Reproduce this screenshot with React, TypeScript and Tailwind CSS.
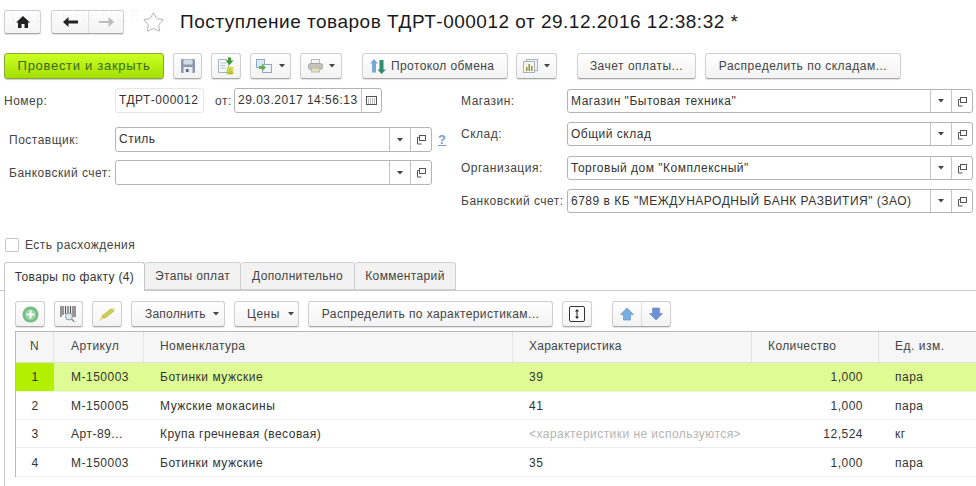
import React from 'react';
import { Star } from 'lucide-react';

const btn =
  'flex items-center justify-center h-full rounded-[3px] border border-[#cfcfcf] border-b-[#aaaaaa] bg-gradient-to-b from-white to-[#f3f3f3] text-[#444] shadow-[0_1px_1px_rgba(0,0,0,0.12)]';

const Caret = () => (
  <svg width="6" height="4" viewBox="0 0 6 4" className="shrink-0">
    <path d="M0 0h6L3 3.5z" fill="#444" />
  </svg>
);

const OpenIcon = () => (
  <svg width="11" height="11" viewBox="0 0 11 11" fill="none" stroke="#555" strokeWidth="1">
    <rect x="3.5" y="1.5" width="6" height="5" fill="#fff" />
    <path d="M1.5 5v5h4M3.5 3.5h-2V5" />
  </svg>
);

const Field = ({ value, className }: { value: string; className: string }) => (
  <div className={`flex h-full items-stretch rounded-[3px] border border-[#b4b4b4] bg-white ${className}`}>
    <div className="flex-1 truncate pl-[3px] leading-[22px] text-[#333]">{value}</div>
    <div className="flex w-[21px] items-center justify-center border-l border-[#c4c4c4]">
      <Caret />
    </div>
    <div className="flex w-[21px] items-center justify-center border-l border-[#c4c4c4]">
      <OpenIcon />
    </div>
  </div>
);

const Save = () => (
  <svg width="16" height="16" viewBox="0 0 16 16">
    <rect x="1" y="1" width="14" height="14" rx="1" fill="#8b98ae" />
    <rect x="3.5" y="1.5" width="9" height="5" fill="#d5dbe6" />
    <rect x="3.5" y="9" width="9" height="6" fill="#e8ebf0" />
    <rect x="6" y="11" width="2.5" height="3" fill="#56617a" />
  </svg>
);

const Posting = () => (
  <svg width="18" height="19" viewBox="0 0 18 19">
    <path d="M1.5 2.5h8l2 2v11h-10z" fill="#f4f6f8" stroke="#a9b3bd" />
    <path d="M3.5 6h6M3.5 8.500h5M3.500 11h5" stroke="#b8c2cc" />
    <path d="M11 0.500h3v3h2.500L12.500 8l-4-4.500H11z" fill="#3c9a34" />
    <ellipse cx="13" cy="11" rx="3.500" ry="1.500" fill="#d8d84a" />
    <ellipse cx="13" cy="13.500" rx="3.500" ry="1.500" fill="#c9cf3c" />
    <ellipse cx="13" cy="16" rx="3.500" ry="1.500" fill="#b9c432" />
  </svg>
);

const Exchange = () => (
  <svg width="17" height="15" viewBox="0 0 17 15">
    <rect x="0.500" y="0.500" width="8" height="8" fill="#dbe7f3" stroke="#8fa9c2" />
    <rect x="6.500" y="5.500" width="9" height="8" fill="#eef3f8" stroke="#8fa9c2" />
    <path d="M3 7h3V5l4 3.500L6 12v-2H3z" fill="#5fb04f" />
  </svg>
);

const Printer = () => (
  <svg width="15" height="14" viewBox="0 0 15 14">
    <rect x="3.500" y="0.500" width="8" height="4" fill="#f5f5f5" stroke="#bbb" />
    <rect x="0.500" y="4.500" width="14" height="6" rx="2" fill="#c4c4ba" stroke="#a5a5a5" />
    <rect x="3.500" y="9" width="8" height="4" fill="#e9dfb8" stroke="#bbb" />
  </svg>
);

const Protocol = () => (
  <svg width="16" height="17" viewBox="0 0 16 17">
    <path d="M4 1L8 5.500H6v9H2v-9H0z" fill="#7ba7d6" />
    <path d="M11.500 16L7.500 11.500H9.500V2h4v9.500H16z" fill="#2f8d6f" />
  </svg>
);

const Report = () => (
  <svg width="15" height="14" viewBox="0 0 15 14">
    <rect x="3.500" y="0.500" width="11" height="11" fill="#eef1f6" stroke="#a8b2c4" />
    <rect x="0.500" y="2.500" width="11" height="11" fill="#f7f5e6" stroke="#a8b2c4" />
    <path d="M3 12V8h1.500v4zM5.500 12V5H7v7zM8 12V7h1.500v5z" fill="#8a9648" />
  </svg>
);

const Plus = () => (
  <svg width="17" height="17" viewBox="0 0 17 17">
    <circle cx="8.500" cy="8.500" r="8" fill="#74bb84" />
    <circle cx="8.500" cy="8.500" r="5.500" fill="#9ad3a4" />
    <path d="M7.500 4.500h2v3h3v2h-3v3h-2v-3h-3v-2h3z" fill="#fff" />
  </svg>
);

const Barcode = () => (
  <svg width="17" height="18" viewBox="0 0 17 18">
    <path d="M1 1v11M3 1v9M5.500 1v8M8 1v7M10.500 1v8M13 1v11M15 1v11" stroke="#555" strokeWidth="1.200" />
    <circle cx="9" cy="11.500" r="3.500" fill="#dfe8ee" stroke="#8a99a5" />
    <path d="M11.500 14l3 3" stroke="#8a99a5" strokeWidth="1.500" />
  </svg>
);

const Brush = () => (
  <svg width="18" height="15" viewBox="0 0 18 15">
    <path d="M1 14l3-5 3 2z" fill="#e2d87a" />
    <path d="M4 9l9-7 3 2-9 7z" fill="#d3d24e" stroke="#a5a530" strokeWidth="0.700" />
    <path d="M13 2l3-1.500 1 1.500-1 2z" fill="#e6df9a" />
  </svg>
);

const FitHeight = () => (
  <svg width="16" height="16" viewBox="0 0 16 16">
    <rect x="0.500" y="0.500" width="15" height="15" rx="1.500" fill="#fff" stroke="#333" />
    <path d="M8 3l2 2.500H6zM8 13l2-2.500H6z" fill="#222" />
    <path d="M8 5v6" stroke="#222" />
  </svg>
);

const ArrowBlock = ({ down }: { down?: boolean }) => (
  <svg width="14" height="14" viewBox="0 0 14 14" className={down ? 'rotate-180' : ''}>
    <path d="M7 1l6.500 6.500H10.500V13h-7V7.500H.500z" fill={down ? '#6f8fd8' : '#79aee2'} stroke="#5a86bf" strokeWidth="0.600" />
  </svg>
);

type Row = { n: string; art: string; name: string; ch: string; qty: string; unit: string };

const rows: Row[] = [
  { n: '1', art: 'М-150003', name: 'Ботинки мужские', ch: '39', qty: '1,000', unit: 'пара' },
  { n: '2', art: 'М-150005', name: 'Мужские мокасины', ch: '41', qty: '1,000', unit: 'пара' },
  { n: '3', art: 'Арт-89...', name: 'Крупа гречневая (весовая)', ch: '<характеристики не используются>', qty: '12,524', unit: 'кг' },
  { n: '4', art: 'М-150003', name: 'Ботинки мужские', ch: '35', qty: '1,000', unit: 'пара' },
];

const rowHeights = ['h-[29px]', 'h-[28px]', 'h-[28px] pt-px', 'h-[29px] pt-px'];

const orgFields = [
  { label: 'Магазин:', value: 'Магазин "Бытовая техника"', gap: 'mb-[9px]' },
  { label: 'Склад:', value: 'Общий склад', gap: 'mb-[10px]' },
  { label: 'Организация:', value: 'Торговый дом "Комплексный"', gap: 'mb-[9px]' },
  { label: 'Банковский счет:', value: '6789 в КБ "МЕЖДУНАРОДНЫЙ БАНК РАЗВИТИЯ" (ЗАО)', gap: '' },
];

export default function App() {
  return (
    <div className="relative h-[486px] w-[976px] overflow-hidden bg-white font-['Liberation_Sans',Arial,sans-serif] text-[12px] tracking-[0.5px] text-[#444]">
      {/* faint watermark over the title bar */}
      <div className="absolute left-[10px] top-[3px] z-10 text-[18px] tracking-[1px] text-black/[0.03]">CLEVERENCE</div>

      {/* Title */}
      <div className="relative mt-[10px] flex h-[24px] items-center pl-[4px]">
        <div className={`${btn} w-[37px]`}>
          <svg width="14" height="12" viewBox="0 0 14 12">
            <path d="M7 0L14 6.500h-2V12H8.500V8h-3v4H2V6.500H0z" fill="#222" />
          </svg>
        </div>
        <div className={`${btn} ml-[10px] w-[73px]`}>
          <div className="flex h-full w-[37px] items-center justify-center border-r border-[#e0e0e0]">
            <svg width="15" height="10" viewBox="0 0 15 10">
              <path d="M5.500 0v3.500H15v3H5.500V10L0 5z" fill="#222" />
            </svg>
          </div>
          <div className="flex h-full flex-1 items-center justify-center">
            <svg width="15" height="10" viewBox="0 0 15 10">
              <path d="M9.500 0v4H0v2h9.500v4L15 5z" fill="#bdbdbd" />
            </svg>
          </div>
        </div>
        <Star className="ml-[18px] h-[23px] w-[23px] text-[#9a9a9a]" strokeWidth={0.8} />
        <div className="ml-[15px] whitespace-nowrap text-[19px] tracking-[0.5px] text-[#1a1a1a]">
          Поступление товаров ТДРТ-000012 от 29.12.2016 12:38:32 *
        </div>
      </div>

      {/* Command bar */}
      <div className="mt-[19px] flex h-[26px] items-stretch pl-[4px]">
        <div className="flex w-[160px] items-center justify-center rounded-[3px] border border-[#86a838] bg-gradient-to-b from-[#ccff22] to-[#a2e000] text-[13px] tracking-[0.7px] text-[#3a6a22] shadow-[0_1px_1px_rgba(0,0,0,0.2)]">
          Провести и закрыть
        </div>
        <div className={`${btn} ml-[9px] w-[29px]`}><Save /></div>
        <div className={`${btn} ml-[9px] w-[30px]`}><Posting /></div>
        <div className={`${btn} ml-[9px] w-[41px] gap-[6px]`}><Exchange /><Caret /></div>
        <div className={`${btn} ml-[9px] w-[42px] gap-[6px]`}><Printer /><Caret /></div>
        <div className={`${btn} ml-[20px] w-[146px] !justify-start gap-[5px] pl-[7px] tracking-[0.4px]`}><Protocol />Протокол обмена</div>
        <div className={`${btn} ml-[8px] w-[41px] gap-[6px]`}><Report /><Caret /></div>
        <div className={`${btn} ml-[20px] w-[119px]`}>Зачет оплаты...</div>
        <div className={`${btn} ml-[9px] w-[196px]`}>Распределить по складам...</div>
      </div>

      {/* Header fields */}
      <div className="mt-[9px] flex h-[125px]">
        <div className="w-[461px] shrink-0">
          <div className="flex h-[25px] items-center pl-[4px]">
            <div className="w-[111px]">Номер:</div>
            <div className="h-full w-[89px] rounded-[3px] border border-[#e6e6e6] pl-[3px] leading-[23px] text-[#333]">ТДРТ-000012</div>
            <div className="ml-[11px] w-[19px]">от:</div>
            <div className="flex h-full w-[148px] rounded-[3px] border border-[#b4b4b4]">
              <div className="flex-1 truncate pl-[3px] leading-[23px] text-[#333]">29.03.2017 14:56:13</div>
              <div className="flex w-[20px] items-center justify-center border-l border-[#c4c4c4]">
                <svg width="11" height="9" viewBox="0 0 11 9">
                  <rect x="0.500" y="0.500" width="10" height="8" fill="none" stroke="#555" />
                  <path d="M2 3h7M2 5h7M2 7h7" stroke="#777" strokeDasharray="1 1" />
                </svg>
              </div>
            </div>
          </div>
          <div className="mt-[14px] flex h-[25px] items-center pl-[9px]">
            <div className="w-[106px]">Поставщик:</div>
            <Field value="Стиль" className="w-[317px]" />
            <div className="ml-[6px] text-[13px] font-bold text-[#7d9cc9] underline">?</div>
          </div>
          <div className="mt-[8px] flex h-[25px] items-center pl-[9px]">
            <div className="w-[106px] whitespace-nowrap">Банковский счет:</div>
            <Field value="" className="w-[317px]" />
          </div>
        </div>
        <div className="flex flex-col pt-[1px]">
          {orgFields.map((f) => (
            <div key={f.label} className={`flex h-[24px] items-center ${f.gap}`}>
              <div className="w-[106px] whitespace-nowrap">{f.label}</div>
              <Field value={f.value} className="w-[406px]" />
            </div>
          ))}
        </div>
      </div>

      {/* Discrepancy flag */}
      <div className="mt-[24px] flex h-[15px] items-center pl-[5px]">
        <div className="h-[14px] w-[14px] rounded-[2px] border border-[#c4c4c4] bg-white" />
        <span className="ml-[6px]">Есть расхождения</span>
      </div>

      {/* Tabs */}
      <div className="mt-[10px] flex h-[29px] items-stretch border-b border-[#c8c8c8] pl-[4px] tracking-[0.35px]">
        <div className="z-10 -mb-px flex w-[141px] items-center justify-center rounded-t-[3px] border border-b-0 border-[#c8c8c8] bg-white text-[#333]">Товары по факту (4)</div>
        <div className="flex w-[96px] items-center justify-center rounded-t-[3px] border border-l-0 border-[#d0d0d0] bg-[#f2f2f2]">Этапы оплат</div>
        <div className="flex w-[114px] items-center justify-center rounded-t-[3px] border border-l-0 border-[#d0d0d0] bg-[#f2f2f2]">Дополнительно</div>
        <div className="flex w-[101px] items-center justify-center rounded-t-[3px] border border-l-0 border-[#d0d0d0] bg-[#f2f2f2]">Комментарий</div>
      </div>

      {/* Tab body */}
      <div className="ml-[4px] h-[196px] border-l border-[#c8c8c8] pl-[10px] pt-[10px]">
        <div className="flex h-[26px] items-stretch">
          <div className={`${btn} w-[30px]`}><Plus /></div>
          <div className={`${btn} ml-[9px] w-[29px]`}><Barcode /></div>
          <div className={`${btn} ml-[9px] w-[30px]`}><Brush /></div>
          <div className={`${btn} ml-[9px] w-[94px] !justify-start gap-[7px] pl-[13px] tracking-[0.2px]`}>Заполнить<Caret /></div>
          <div className={`${btn} ml-[9px] w-[65px] !justify-start gap-[8px] pl-[12px]`}>Цены<Caret /></div>
          <div className={`${btn} ml-[9px] w-[245px] tracking-[0.4px]`}>Распределить по характеристикам...</div>
          <div className={`${btn} ml-[9px] w-[30px]`}><FitHeight /></div>
          <div className={`${btn} ml-[20px] w-[59px]`}>
            <div className="flex h-full w-[29px] items-center justify-center border-r border-[#dddddd]"><ArrowBlock /></div>
            <div className="flex h-full flex-1 items-center justify-center"><ArrowBlock down /></div>
          </div>
        </div>

        {/* Goods table */}
        <div className="mt-[4px] border-l border-t border-[#b8b8b8]">
          <div className="grid h-[31px] grid-cols-[38px_90px_369px_239px_127px_97px] items-center border-b border-[#dedede] bg-[#f6f6f6]">
            <div className="flex h-full items-center justify-center border-r border-[#e6e6e6] pb-[3px]">N</div>
            <div className="flex h-full items-center border-r border-[#e6e6e6] pb-[3px] pl-[17px]">Артикул</div>
            <div className="flex h-full items-center border-r border-[#e6e6e6] pb-[3px] pl-[16px] tracking-[0.4px]">Номенклатура</div>
            <div className="flex h-full items-center border-r border-[#e0e0e0] pb-[3px] pl-[16px] tracking-[0.25px]">Характеристика</div>
            <div className="flex h-full items-center border-r border-[#e0e0e0] pb-[3px] pl-[16px] tracking-[0.4px]">Количество</div>
            <div className="flex h-full items-center pb-[3px] pl-[16px]">Ед. изм.</div>
          </div>
          {rows.map((r, i) => (
            <div
              key={r.n}
              className={`grid grid-cols-[38px_90px_369px_239px_127px_97px] items-center border-b text-[#333] ${rowHeights[i]} ${
                i === 0 ? 'border-[#eef8d0] bg-[#dffc94]' : 'border-[#ececec] bg-white'
              }`}
            >
              <div className={`flex h-full items-center justify-center ${i === 0 ? 'bg-[#b2f000]' : ''}`}>{r.n}</div>
              <div className="pl-[17px]">{r.art}</div>
              <div className="pl-[16px]">{r.name}</div>
              <div className={`whitespace-nowrap pl-[16px] ${i === 2 ? 'text-[#b4b4b4] tracking-[0.45px]' : ''}`}>{r.ch}</div>
              <div className="pr-[16px] text-right">{r.qty}</div>
              <div className="pl-[16px]">{r.unit}</div>
            </div>
          ))}
        </div>
      </div>
    </div>
  );
}
